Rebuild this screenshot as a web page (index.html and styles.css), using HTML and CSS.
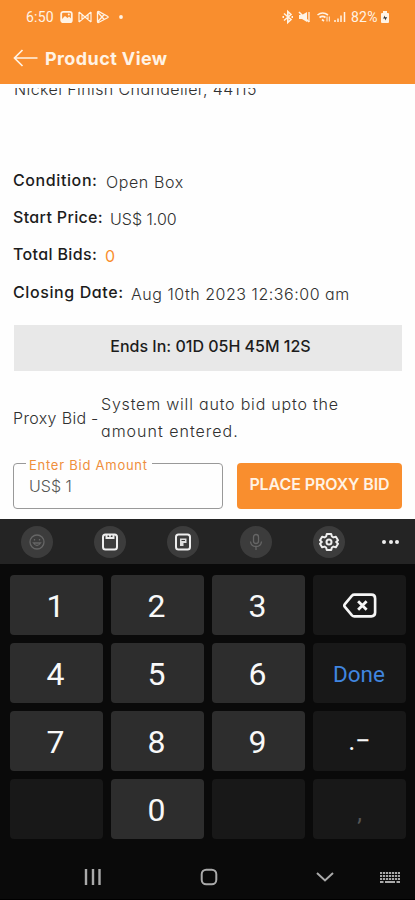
FILE: index.html
```html
<!DOCTYPE html>
<html lang="en">
<head>
<meta charset="utf-8">
<title>Product View</title>
<link rel="stylesheet" href="styles.css">
</head>
<body>
<div class="phone">
  <header class="header">
    <div class="status">
      <span class="clock">6:50</span>
      <svg class="status-left" width="66" height="16" viewBox="0 0 66 16">
        <rect x="1.2" y="2.8" width="10.6" height="10.4" rx="2" fill="none" stroke="#fff3e5" stroke-width="1.8"/>
        <path d="M2 10l3-3 2.5 2L9 7.5l3 3V13H2z" fill="#fff3e5"/><circle cx="8.8" cy="5.6" r="1" fill="#fff3e5"/>
        <path d="M19 3v10M31 3v10M19 3l6 5 6-5M19 13l6-5 6 5M22 6v5M28 6v5" fill="none" stroke="#fff3e5" stroke-width="1.2"/>
        <path d="M37.500 3.500q0-1.500 1.500-.8l8.500 4.500q1.400.8 0 1.600L39 13.300q-1.500.8-1.500-.8zM37.500 3l6.500 7.200M37.500 13L44 5.800" fill="none" stroke="#fff3e5" stroke-width="1.3"/>
        <circle cx="61" cy="8" r="1.900" fill="#fff3e5"/>
      </svg>
      <svg class="status-right" width="68" height="16" viewBox="0 0 68 16">
        <g fill="none" stroke="#fff3e5" stroke-width="1.600">
          <path d="M3 4.500l7 6-3.200 3V2.500L10 5.500l-7 6"/><path d="M1.500 8h1.500M10.500 8H12" stroke-width="2"/>
          <path d="M18 3l10 10"/>
          <path d="M36.500 6q5-4 10.500 0M38.500 8.500q3-2.300 6 0M41 10.500l2 1.500" />
          <path d="M46 7.500v5M48.300 7.500v5" stroke-width="1"/>
          <path d="M54 13v-2M57 13V9.500M60 13V6.500M63.500 13V3" stroke-width="1.500"/>
        </g>
        <path d="M18 6h3l5-3v10l-5-3h-3z" fill="#fff3e5"/><path d="M28 3v10" stroke="#fff3e5" stroke-width="1.300"/>
      </svg>
      <span class="percent">82%</span>
      <svg width="10" height="14" viewBox="0 0 10 14"><path d="M3 1h4v2h1q1 0 1 1v8q0 1-1 1H2q-1 0-1-1V4q0-1 1-1h1z" fill="#fff3e5"/><path d="M5 5.500L3 8.500h2v2l2.200-3.200H5z" fill="#333"/></svg>
    </div>
    <div class="appbar">
      <svg width="26" height="20" viewBox="0 0 26 20"><path d="M24.500 10H1.500M9.500 2L1.500 10l8 8" fill="none" stroke="#fff3e5" stroke-width="1.700"/></svg>
      <h1 class="title">Product View</h1>
    </div>
  </header>

  <main class="content">
    <div class="clip"><p class="product">Nickel Finish Chandelier, 44115</p></div>
    <dl class="details">
      <div class="row"><dt class="l-cond">Condition:</dt><dd class="v-cond">Open Box</dd></div>
      <div class="row"><dt class="l-price">Start Price:</dt><dd class="v-price">US$ 1.00</dd></div>
      <div class="row"><dt class="l-bids">Total Bids:</dt><dd class="bids">0</dd></div>
      <div class="row"><dt class="l-date">Closing Date:</dt><dd class="v-date">Aug 10th 2023 12:36:00 am</dd></div>
    </dl>
    <div class="timer"><span>Ends In: 01D 05H 45M 12S</span></div>
    <div class="proxy">
      <span class="proxy-name">Proxy Bid</span><span class="dash">-</span>
      <p class="hint">System will auto bid upto the<br><span class="hint-end">amount entered.</span></p>
    </div>
    <div class="bid">
      <div class="field"><span class="legend">Enter Bid Amount</span><span class="amount">US$ 1</span></div>
      <button class="place">PLACE PROXY BID</button>
    </div>
  </main>

  <section class="keyboard">
    <div class="tools">
      <span class="tool dim"><svg width="18" height="18" viewBox="0 0 18 18"><circle cx="9" cy="9" r="7"/><path d="M5.500 10q3.500 5 7 0zM6.500 6v1.500M11.500 6v1.500"/></svg></span>
      <span class="tool"><svg width="18" height="18" viewBox="0 0 18 18"><rect x="2" y="1.500" width="14" height="15" rx="2.500"/><path d="M5.500 2v3h7V2M8 2.800h2"/></svg></span>
      <span class="tool"><svg width="18" height="18" viewBox="0 0 18 18"><rect x="2" y="1.500" width="14" height="15" rx="2.500"/><path d="M6 13V5.500h6.500V10H9.500v3z" class="solid"/><path d="M7.500 7.500h3.500" class="slot"/></svg></span>
      <span class="tool dim"><svg width="18" height="18" viewBox="0 0 18 18"><rect x="6.500" y="1.500" width="5" height="9" rx="2.500"/><path d="M3.500 8.500q.5 5 5.500 5t5.500-5M9 13.500v3.500"/></svg></span>
      <span class="tool"><svg width="20" height="20" viewBox="0 0 20 20"><path d="M7.800 2h4.400l.7 2.500 1.500.9 2.500-.7 2.100 3.600-1.800 1.700 1.800 1.700-2.100 3.600-2.500-.7-1.500.9-.7 2.500H7.800l-.7-2.500-1.500-.9-2.500.7L1 11.700 2.800 10 1 8.300l2.100-3.600 2.500.7 1.500-.9z" stroke-linejoin="round"/><circle cx="10" cy="10" r="2.500"/></svg></span>
      <span class="more"><i></i><i></i><i></i></span>
    </div>
    <div class="keys">
      <span class="key">1</span><span class="key">2</span><span class="key">3</span>
      <span class="key fn"><svg width="34" height="25" viewBox="0 0 36 26"><path d="M12 1.500h18q4 0 4 4v15q0 4-4 4H12q-1.500 0-2.500-1L2 14.500q-1.200-1.500 0-3L9.500 2.500q1-1 2.500-1z" fill="none" stroke="#f5f5f5" stroke-width="2.800"/><path d="M16 8.500l9 9M25 8.500l-9 9" stroke="#f5f5f5" stroke-width="3"/></svg></span>
      <span class="key">4</span><span class="key">5</span><span class="key">6</span><span class="key fn done">Done</span>
      <span class="key">7</span><span class="key">8</span><span class="key">9</span><span class="key fn sign">.−</span>
      <span class="key fn"></span><span class="key">0</span><span class="key fn"></span><span class="key fn comma">,</span>
    </div>
    <nav class="nav">
      <svg class="recents" width="18" height="18" viewBox="0 0 18 18"><path d="M2 1v16M9 1v16M15.500 1v16" stroke-width="2.400"/></svg>
      <svg class="home" width="18" height="18" viewBox="0 0 18 18"><rect x="1.700" y="1.700" width="14.600" height="14.600" rx="4.500" stroke-width="2"/></svg>
      <svg class="hide" width="18" height="18" viewBox="0 0 18 18"><path d="M1 5L9 12.500 17 5" stroke-width="2"/></svg>
      <svg width="20" height="18" viewBox="0 0 20 18"><path d="M0 5h20M0 8h20M0 11h20" stroke-width="2.200" stroke-dasharray="2.200 .8"/><path d="M0 14h3.500M5 14h10M16.500 14H20" stroke-width="2"/></svg>
    </nav>
  </section>
</div>
</body>
</html>
```
FILE: styles.css
```css
* { box-sizing: border-box; margin: 0; }
body { font-family: Inter, "Liberation Sans", sans-serif; font-feature-settings: "cv11"; background: #0a0a0a; }
.phone { width: 415px; height: 900px; overflow: hidden; background: #fefefe; display: flex; flex-direction: column; white-space: nowrap; }
.header { height: 84px; background: #f98e2e; color: #fff3e5; }
.status { height: 33px; padding-left: 26px; display: flex; align-items: center; font: 14px Roboto, sans-serif; letter-spacing: .2px; }
.clock { width: 34px; }
.status-left { margin-right: 155px; }
.status-right { margin-right: 2px; }
.percent { width: 29px; }
.appbar { height: 51px; padding: 0 0 1px 13px; display: flex; align-items: center; gap: 6px; }
.title { font-size: 18px; font-weight: 650; letter-spacing: .4px; }

.content { height: 435px; padding: 4px 13px 0 14px; color: #303030; }
.clip { height: 14px; overflow: hidden; }
.product { font-size: 16px; line-height: 20px; margin-top: -9px; font-weight: 350; letter-spacing: .4px; }
.details { margin-top: 59px; font-size: 16px; }
.row { height: 37.300px; display: flex; align-items: center; }
dt { font-weight: 500; color: #1c1c1c; margin-left: -1px; }
dd { font-weight: 300; padding-top: 4px; }
.l-cond { width: 93px; letter-spacing: .6px; }
.v-cond { letter-spacing: .6px; }
.l-price { width: 97px; letter-spacing: .35px; }
.l-bids { width: 92px; letter-spacing: .35px; }
.l-date { width: 118px; letter-spacing: .6px; }
.v-date { letter-spacing: .53px; }
.bids { color: #f98e2e; font-weight: 400; }
.timer { height: 46px; margin-top: 14.800px; background: #e8e8e8; display: flex; align-items: center; justify-content: center; font-size: 16px; font-weight: 500; color: #1c1c1c; padding: 0 0 3px 5px; }
.proxy { height: 54px; margin-top: 20px; display: flex; align-items: center; font-size: 16px; font-weight: 300; }
.proxy-name { width: 78px; margin-left: -1px; letter-spacing: .35px; }
.dash { width: 10px; }
.hint { line-height: 27px; letter-spacing: .8px; }
.hint-end { letter-spacing: 1px; }
.bid { margin: 18px 0 0 -1px; display: flex; gap: 14px; }
.field { position: relative; width: 210px; height: 46px; border: 1px solid #999; border-radius: 4px; padding: 12px 15px; font-size: 16px; font-weight: 300; line-height: 20px; }
.legend { position: absolute; left: 12px; top: -9px; width: 126px; padding: 0 3px; background: #fefefe; color: #ef8f3c; font-size: 13px; font-weight: 400; line-height: 20px; letter-spacing: .75px; }
.amount { color: #555; }
.place { width: 165px; height: 46px; border: 0; border-radius: 4px; background: #f98e2e; color: #fff3e5; font: 600 16px Inter, sans-serif; letter-spacing: -.1px; padding: 0 0 3px; white-space: nowrap; }

.keyboard { height: 381px; background: #0a0a0a; border-bottom: 1px solid #000; }
.tools { height: 45px; background: #242424; padding-left: 21px; display: flex; align-items: center; gap: 41px; }
.tool { width: 32px; height: 32px; border-radius: 50%; background: #3c3c3c; display: flex; align-items: center; justify-content: center; }
.tool svg { fill: none; stroke: #eee; stroke-width: 2; }
.tool .solid { fill: #ddd; stroke: none; }
.tool .slot { stroke: #3c3c3c; stroke-width: 1; }
.tool.dim svg { stroke: #666; stroke-width: 1.300; }
.more { display: flex; gap: 2.500px; margin-left: -4px; }
.more i { width: 4px; height: 4px; border-radius: 50%; background: #eee; }
.keys { padding: 11px 10px 0; display: grid; grid-template-columns: repeat(4, 93px); grid-template-rows: repeat(4, 60px); gap: 8px; }
.key { border-radius: 4px; background: #2d2d2d; color: #f8f8f8; display: flex; align-items: center; justify-content: center; font: 450 32px Roboto, sans-serif; padding: 2px 2px 0 0; }
.fn { background: #181818; padding: 0; }
.done { color: #4085df; font-size: 22.500px; padding: 2px 1px 0 0; }
.sign { font-size: 27px; }
.comma { color: #555; font-size: 24px; padding-top: 8px; }
.nav { height: 61px; padding: 15px 0 0 84px; display: flex; align-items: center; }
.nav svg { fill: none; stroke: #aaa; }
.recents { margin-right: 97.500px; }
.home { margin-right: 98.500px; }
.hide { margin-right: 46px; }
```
